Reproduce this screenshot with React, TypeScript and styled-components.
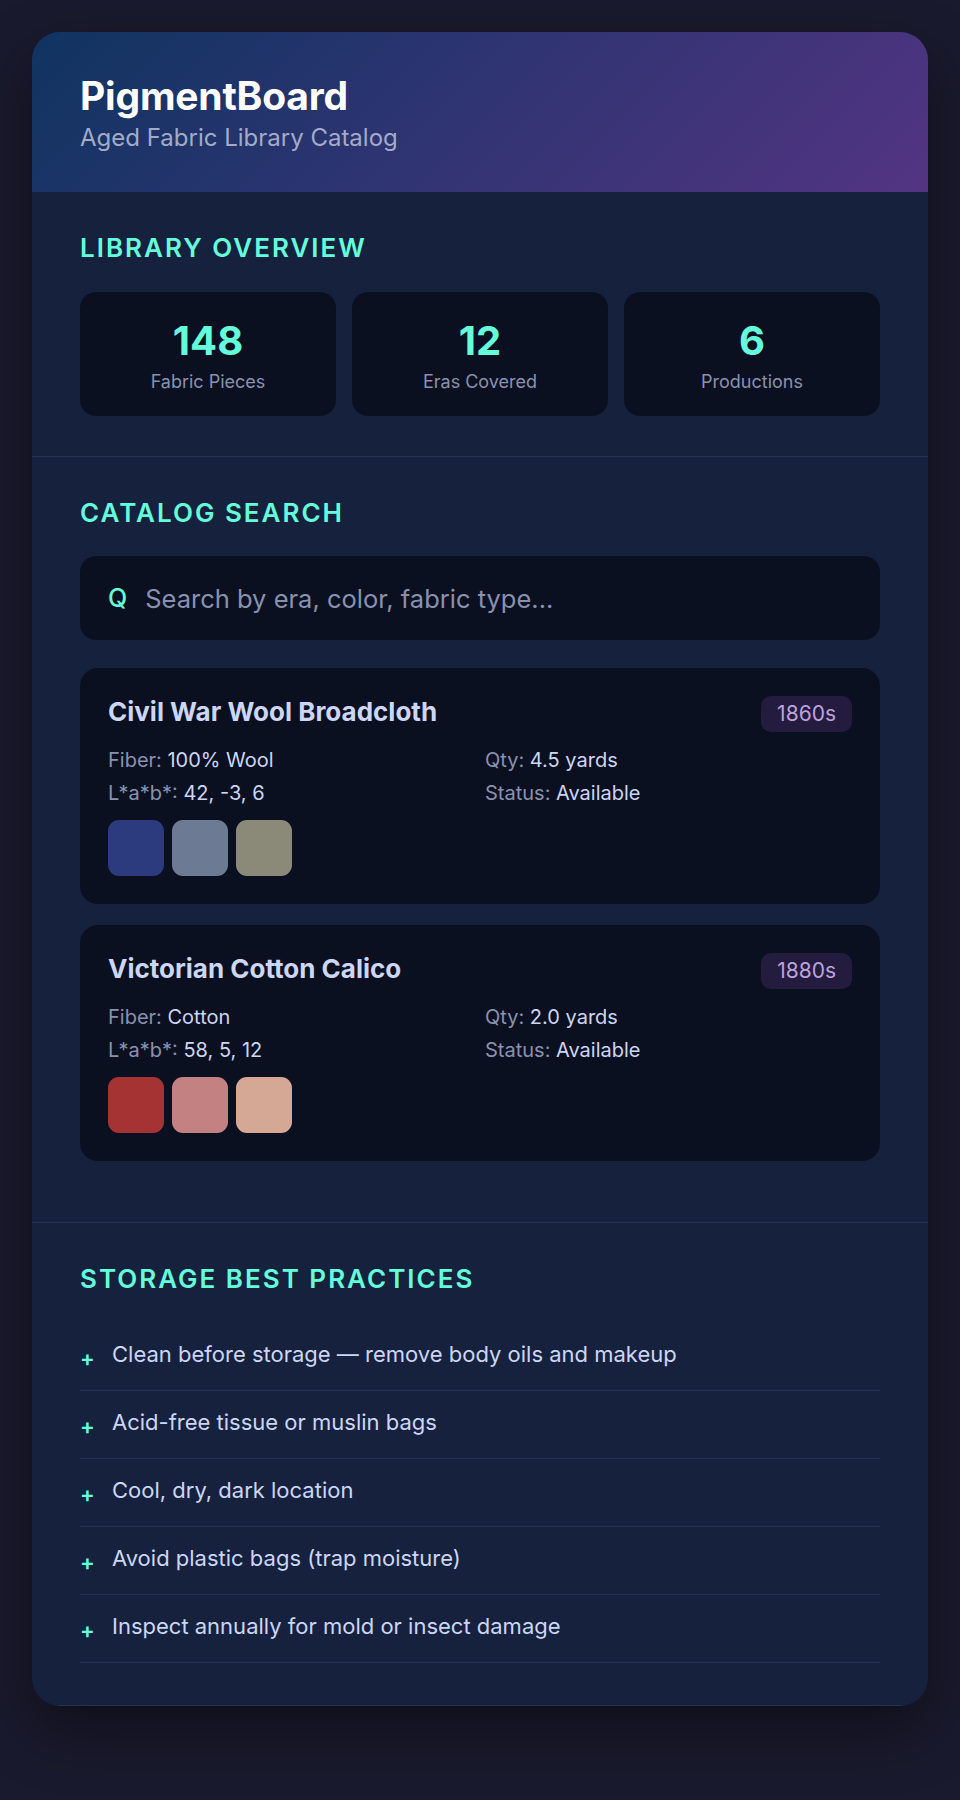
import React from "react";
import styled, { createGlobalStyle } from "styled-components";

const Global = createGlobalStyle`
  html, body { margin: 0; padding: 0; background: #1a1a2e; }
  body { font-family: Inter, "Noto Sans", sans-serif; -webkit-font-smoothing: antialiased; }
  * { box-sizing: border-box; }
`;

const Page = styled.div`
  min-height: 1800px;
  padding: 32px;
  background: #1a1a2e;
`;

const Shell = styled.div`
  background: #16213e;
  border-radius: 28px;
  overflow: hidden;
  box-shadow: 0 24px 60px rgba(0, 0, 0, 0.45);
`;

const Header = styled.header`
  padding: 40px 48px 40px;
  background: linear-gradient(135deg, #0f3460 0%, #2a3470 40%, #533483 100%);
`;

const Title = styled.h1`
  margin: 0;
  font-size: 39px;
  font-weight: 700;
  color: #ffffff;
  letter-spacing: -0.2px;
`;

const Subtitle = styled.p`
  margin: 4px 0 0;
  font-size: 24px;
  color: #a3abc8;
`;

const Section = styled.section`
  padding: 40px 48px;
  border-bottom: 1px solid rgba(136, 146, 176, 0.14);

  &:last-child {
    padding-bottom: 42px;
  }
`;

const SectionTitle = styled.h2`
  margin: 0 0 28.5px;
  font-size: 26px;
  font-weight: 600;
  letter-spacing: 2px;
  text-transform: uppercase;
  color: #64ffda;
`;

const StatGrid = styled.div`
  display: grid;
  grid-template-columns: repeat(3, 1fr);
  gap: 16px;
`;

const StatBox = styled.div`
  background: #0b1020;
  border-radius: 16px;
  padding: 24px 12px;
  display: flex;
  flex-direction: column;
  align-items: center;
  gap: 6px;
`;

const StatValue = styled.div`
  font-size: 40px;
  font-weight: 700;
  color: #64ffda;
`;

const StatLabel = styled.div`
  font-size: 18px;
  color: #8892b0;
`;

const SearchBar = styled.div`
  display: flex;
  align-items: center;
  gap: 18px;
  background: #0b1020;
  border-radius: 16px;
  padding: 26.5px 28px;
  margin-bottom: 28px;
`;

const SearchIcon = styled.span`
  font-size: 25px;
  font-weight: 500;
  color: #64ffda;
`;

const SearchText = styled.span`
  font-size: 25.5px;
  color: #8892b0;
`;

const ItemCard = styled.div`
  background: #0b1020;
  border-radius: 18px;
  padding: 28px;
  margin-bottom: 21px;
`;

const ItemHead = styled.div`
  display: flex;
  justify-content: space-between;
  align-items: flex-start;
  margin-bottom: 14px;
`;

const ItemName = styled.h3`
  margin: 0;
  font-size: 26px;
  font-weight: 700;
  color: #ccd6f6;
`;

const EraBadge = styled.span`
  background: #231c3e;
  color: #bfa2db;
  font-size: 21px;
  line-height: 24px;
  padding: 6px 16px;
  border-radius: 10px;
`;

const InfoGrid = styled.div`
  display: grid;
  grid-template-columns: 1fr 1fr;
  column-gap: 10px;
  row-gap: 5px;
  margin-bottom: 13px;
`;

const Info = styled.div`
  font-size: 20px;
  line-height: 28px;
  color: #ccd6f6;
`;

const InfoKey = styled.span`
  color: #8892b0;
`;

const Swatches = styled.div`
  display: flex;
  gap: 8px;
`;

const Swatch = styled.div<{ $c: string }>`
  width: 56px;
  height: 56px;
  border-radius: 11px;
  background: ${(p) => p.$c};
`;

const TipList = styled.ul`
  list-style: none;
  margin: 0;
  padding: 0;
`;

const Tip = styled.li`
  display: flex;
  align-items: flex-start;
  gap: 18px;
  padding: 16px 0;
  border-bottom: 1px solid rgba(136, 146, 176, 0.14);
  font-size: 22px;
  line-height: 31px;
  color: #ccd6f6;
`;

const Plus = styled.span`
  color: #64ffda;
  font-size: 22px;
  font-weight: 600;
  line-height: 31px;
  width: 14px;
  margin-top: 4px;
`;

type Item = {
  name: string;
  era: string;
  fiber: string;
  qty: string;
  lab: string;
  status: string;
  colors: string[];
};

const items: Item[] = [
  {
    name: "Civil War Wool Broadcloth",
    era: "1860s",
    fiber: "100% Wool",
    qty: "4.5 yards",
    lab: "42, -3, 6",
    status: "Available",
    colors: ["#2c3a7e", "#6c7a94", "#8b8a78"],
  },
  {
    name: "Victorian Cotton Calico",
    era: "1880s",
    fiber: "Cotton",
    qty: "2.0 yards",
    lab: "58, 5, 12",
    status: "Available",
    colors: ["#a63334", "#c48182", "#d5a896"],
  },
];

const tips = [
  "Clean before storage — remove body oils and makeup",
  "Acid-free tissue or muslin bags",
  "Cool, dry, dark location",
  "Avoid plastic bags (trap moisture)",
  "Inspect annually for mold or insect damage",
];

export default function App() {
  return (
    <Page>
      <Global />
      <Shell>
        <Header>
          <Title>PigmentBoard</Title>
          <Subtitle>Aged Fabric Library Catalog</Subtitle>
        </Header>

        <Section>
          <SectionTitle>Library Overview</SectionTitle>
          <StatGrid>
            <StatBox>
              <StatValue>148</StatValue>
              <StatLabel>Fabric Pieces</StatLabel>
            </StatBox>
            <StatBox>
              <StatValue>12</StatValue>
              <StatLabel>Eras Covered</StatLabel>
            </StatBox>
            <StatBox>
              <StatValue>6</StatValue>
              <StatLabel>Productions</StatLabel>
            </StatBox>
          </StatGrid>
        </Section>

        <Section>
          <SectionTitle>Catalog Search</SectionTitle>
          <SearchBar>
            <SearchIcon>Q</SearchIcon>
            <SearchText>Search by era, color, fabric type...</SearchText>
          </SearchBar>
          {items.map((it) => (
            <ItemCard key={it.name}>
              <ItemHead>
                <ItemName>{it.name}</ItemName>
                <EraBadge>{it.era}</EraBadge>
              </ItemHead>
              <InfoGrid>
                <Info>
                  <InfoKey>Fiber:</InfoKey> {it.fiber}
                </Info>
                <Info>
                  <InfoKey>Qty:</InfoKey> {it.qty}
                </Info>
                <Info>
                  <InfoKey>L*a*b*:</InfoKey> {it.lab}
                </Info>
                <Info>
                  <InfoKey>Status:</InfoKey> {it.status}
                </Info>
              </InfoGrid>
              <Swatches>
                {it.colors.map((c) => (
                  <Swatch key={c} $c={c} />
                ))}
              </Swatches>
            </ItemCard>
          ))}
        </Section>

        <Section>
          <SectionTitle>Storage Best Practices</SectionTitle>
          <TipList>
            {tips.map((t) => (
              <Tip key={t}>
                <Plus>+</Plus>
                <span>{t}</span>
              </Tip>
            ))}
          </TipList>
        </Section>
      </Shell>
    </Page>
  );
}
